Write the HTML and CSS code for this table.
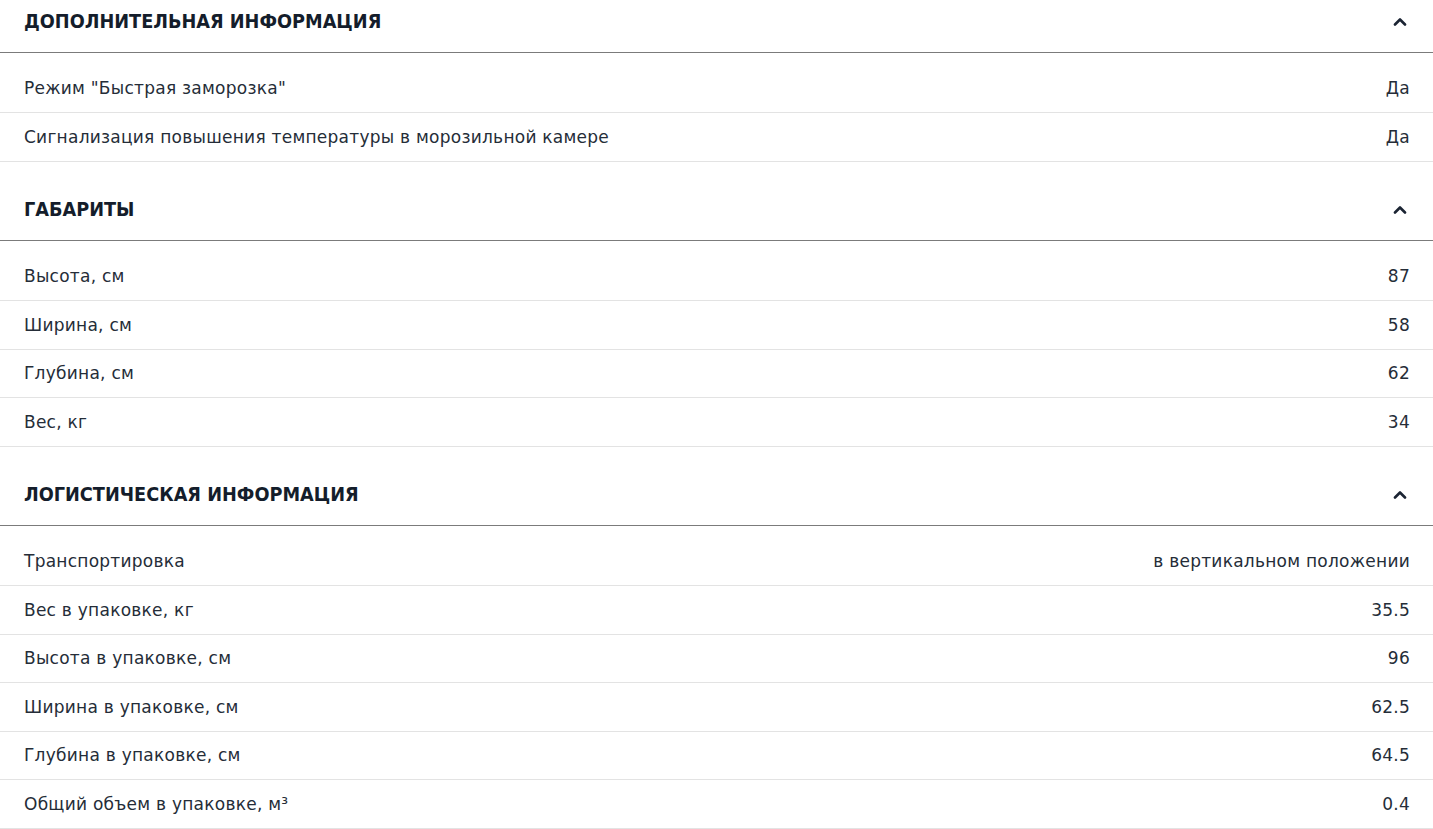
FILE: index.html
```html
<!DOCTYPE html>
<html lang="ru">
<head>
<meta charset="utf-8">
<title>Характеристики</title>
<link rel="stylesheet" href="styles.css">
</head>
<body>
<div class="specs">
  <section class="group">
    <div class="group-head">
      <h2 class="group-title">ДОПОЛНИТЕЛЬНАЯ ИНФОРМАЦИЯ</h2>
      <svg class="chevron" viewBox="0 0 14 9" width="14" height="9"><path d="M2 7.5 L7 2.5 L12 7.5" fill="none" stroke="#1b2433" stroke-width="2.6" stroke-linecap="round" stroke-linejoin="round"/></svg>
    </div>
    <ul class="rows">
      <li class="row"><span class="name">Режим "Быстрая заморозка"</span><span class="value">Да</span></li>
      <li class="row"><span class="name">Сигнализация повышения температуры в морозильной камере</span><span class="value">Да</span></li>
    </ul>
  </section>
  <section class="group">
    <div class="group-head">
      <h2 class="group-title">ГАБАРИТЫ</h2>
      <svg class="chevron" viewBox="0 0 14 9" width="14" height="9"><path d="M2 7.5 L7 2.5 L12 7.5" fill="none" stroke="#1b2433" stroke-width="2.6" stroke-linecap="round" stroke-linejoin="round"/></svg>
    </div>
    <ul class="rows">
      <li class="row"><span class="name">Высота, см</span><span class="value">87</span></li>
      <li class="row"><span class="name">Ширина, см</span><span class="value">58</span></li>
      <li class="row"><span class="name">Глубина, см</span><span class="value">62</span></li>
      <li class="row"><span class="name">Вес, кг</span><span class="value">34</span></li>
    </ul>
  </section>
  <section class="group">
    <div class="group-head">
      <h2 class="group-title">ЛОГИСТИЧЕСКАЯ ИНФОРМАЦИЯ</h2>
      <svg class="chevron" viewBox="0 0 14 9" width="14" height="9"><path d="M2 7.5 L7 2.5 L12 7.5" fill="none" stroke="#1b2433" stroke-width="2.6" stroke-linecap="round" stroke-linejoin="round"/></svg>
    </div>
    <ul class="rows">
      <li class="row"><span class="name">Транспортировка</span><span class="value">в вертикальном положении</span></li>
      <li class="row"><span class="name">Вес в упаковке, кг</span><span class="value">35.5</span></li>
      <li class="row"><span class="name">Высота в упаковке, см</span><span class="value">96</span></li>
      <li class="row"><span class="name">Ширина в упаковке, см</span><span class="value">62.5</span></li>
      <li class="row"><span class="name">Глубина в упаковке, см</span><span class="value">64.5</span></li>
      <li class="row"><span class="name">Общий объем в упаковке, м³</span><span class="value">0.4</span></li>
    </ul>
  </section>
</div>
</body>
</html>
```
FILE: styles.css
```css
* { box-sizing: border-box; }
html, body { margin: 0; padding: 0; background: #fff; }
body {
  font-family: "DejaVu Sans", "Noto Sans", sans-serif;
  color: #222b36;
}
.specs { display: flex; flex-direction: column; }
.group { margin-top: 26.5px; }
.group:first-child { margin-top: 0; }
.group-head {
  display: flex;
  align-items: center;
  justify-content: space-between;
  height: 53px;
  padding: 0 24px 10px 24px;
  border-bottom: 1px solid #7b7b7b;
}
.group-title {
  margin: 0;
  font-family: "DejaVu Sans Condensed", "DejaVu Sans", sans-serif;
  font-size: 19.7px;
  font-weight: bold;
  color: #141d2b;
}
.chevron { display: block; margin-right: 2px; }
.rows { list-style: none; margin: 0; padding: 11.5px 0 0 0; }
.row {
  display: flex;
  justify-content: space-between;
  align-items: center;
  height: 48.5px;
  padding: 0 23px 0 24px;
  border-bottom: 1px solid #e3e3e3;
  font-size: 17px;
  letter-spacing: 0.25px;
  color: #252d38;
}
```
